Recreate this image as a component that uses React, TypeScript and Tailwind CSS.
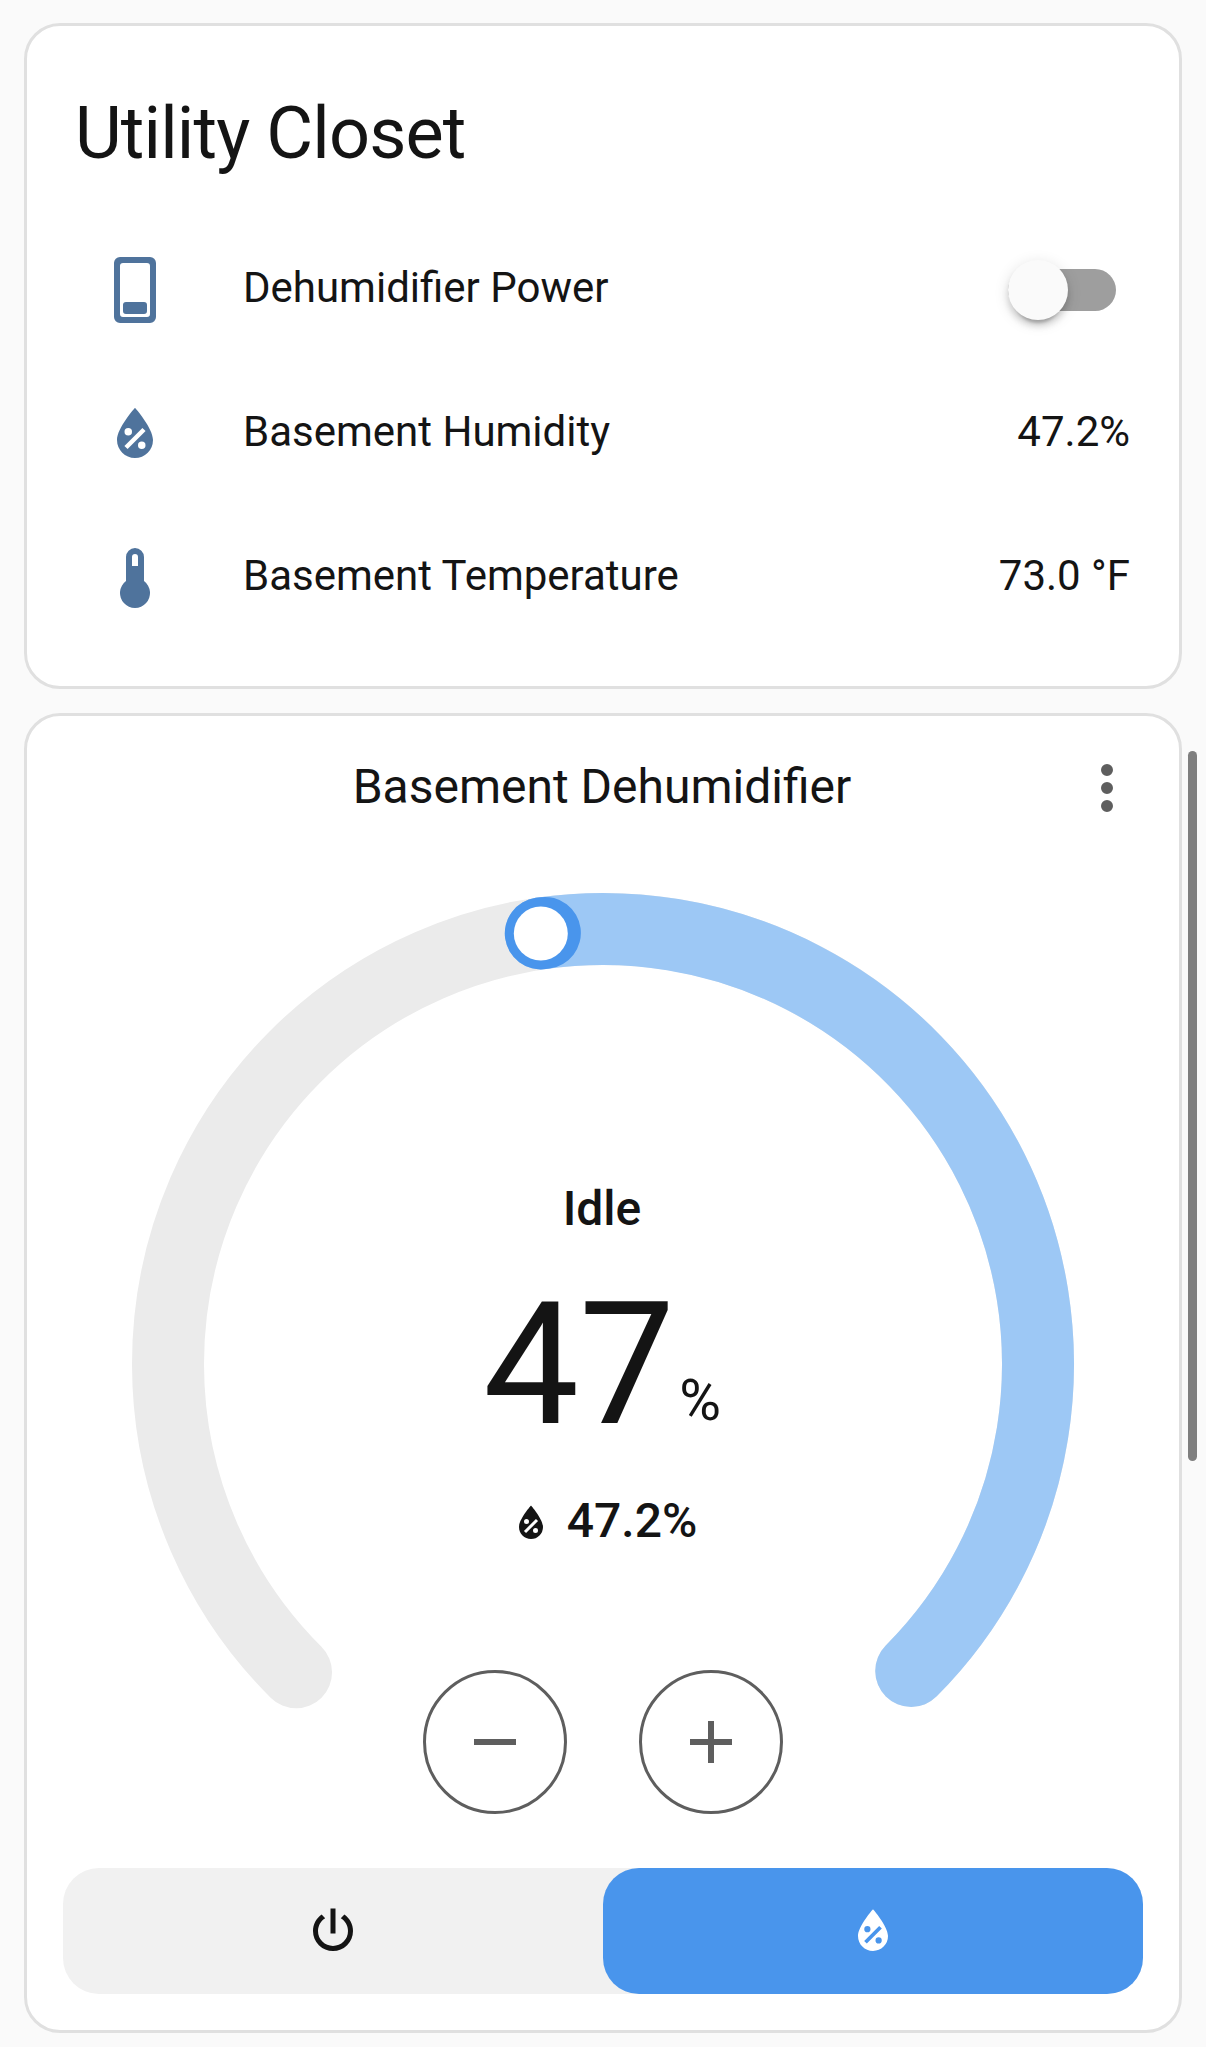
import { useState, type ReactNode } from "react";

const ICONS = {
  waterPercent:
    "M12,3.25C12,3.25 6,10 6,14C6,17.32 8.69,20 12,20A6,6 0 0,0 18,14C18,10 12,3.25 12,3.25M14.47,9.97L15.53,11.03L9.53,17.03L8.47,15.97M9.75,10A1.25,1.25 0 0,1 11,11.25A1.25,1.25 0 0,1 9.75,12.5A1.25,1.25 0 0,1 8.5,11.25A1.25,1.25 0 0,1 9.75,10M14.25,14.5A1.25,1.25 0 0,1 15.5,15.75A1.25,1.25 0 0,1 14.25,17A1.25,1.25 0 0,1 13,15.75A1.25,1.25 0 0,1 14.25,14.5Z",
  thermometer:
    "M15 13V5A3 3 0 0 0 9 5V13A5 5 0 1 0 15 13M12 4A1 1 0 0 1 13 5V8H11V5A1 1 0 0 1 12 4Z",
  dehumidifier:
    "M7 1H17A2 2 0 0 1 19 3V21A2 2 0 0 1 17 23H7A2 2 0 0 1 5 21V3A2 2 0 0 1 7 1M8 3A1 1 0 0 0 7 4V20A1 1 0 0 0 8 21H16A1 1 0 0 0 17 20V4A1 1 0 0 0 16 3H8M9 16H15A1 1 0 0 1 16 17V19A1 1 0 0 1 15 20H9A1 1 0 0 1 8 19V17A1 1 0 0 1 9 16Z",
  dots: "M12,16A2,2 0 0,1 14,18A2,2 0 0,1 12,20A2,2 0 0,1 10,18A2,2 0 0,1 12,16M12,10A2,2 0 0,1 14,12A2,2 0 0,1 12,14A2,2 0 0,1 10,12A2,2 0 0,1 12,10M12,4A2,2 0 0,1 14,6A2,2 0 0,1 12,8A2,2 0 0,1 10,6A2,2 0 0,1 12,4Z",
  minus: "M19,13H5V11H19V13Z",
  plus: "M19,13H13V19H11V13H5V11H11V5H13V11H19V13Z",
  power:
    "M16.56,5.44L15.11,6.89C16.84,7.94 18,9.83 18,12A6,6 0 0,1 12,18A6,6 0 0,1 6,12C6,9.83 7.16,7.94 8.88,6.88L7.44,5.44C5.36,6.88 4,9.28 4,12A8,8 0 0,0 12,20A8,8 0 0,0 20,12C20,9.28 18.64,6.88 16.56,5.44M13,3H11V13H13",
};

function Icon({ name, className }: { name: keyof typeof ICONS; className: string }) {
  return (
    <svg viewBox="0 0 24 24" fill="currentColor" fillRule="evenodd" className={className}>
      <path d={ICONS[name]} />
    </svg>
  );
}

// Dial geometry, in the svg's own 320x320 units
const RADIUS = 145;
const START_ANGLE = -135.12;

const pointAt = (value: number) => {
  const angle = ((value * 2.7 + START_ANGLE) * Math.PI) / 180;
  return { x: 160 + RADIUS * Math.sin(angle), y: 160 - RADIUS * Math.cos(angle) };
};

const arc = (from: number, to: number) => {
  const a = pointAt(from);
  const b = pointAt(to);
  const large = (to - from) * 2.7 > 180 ? 1 : 0;
  return `M${a.x} ${a.y}A${RADIUS} ${RADIUS} 0 ${large} 1 ${b.x} ${b.y}`;
};

function Dial({ target, current }: { target: number; current: number }) {
  const knob = pointAt(target);
  const from = Math.min(target, current);
  const to = Math.max(target, current);

  return (
    <svg viewBox="0 0 320 320" fill="none" strokeWidth="24" strokeLinecap="round" className="block size-[960px]">
      <path d={arc(0, 100)} stroke="#ebebeb" />
      <path d={arc(target, 100)} stroke="#9dc8f5" />
      <path d={arc(from, to)} stroke="#4995ec" />
      <circle cx={knob.x} cy={knob.y} r="9" fill="#fff" />
    </svg>
  );
}

function EntityRow({ icon, name, children }: { icon: keyof typeof ICONS; name: string; children: ReactNode }) {
  return (
    <div className="flex h-36 items-center">
      <div className="flex w-[120px] justify-center">
        <Icon name={icon} className="size-[72px] text-[#4f739c]" />
      </div>
      <div className="ml-12 flex-1 pb-1">{name}</div>
      {children}
    </div>
  );
}

export default function App() {
  const [power, setPower] = useState(false);
  const [target, setTarget] = useState(47);
  const current = 47.2;

  return (
    <div className="relative flex h-[2047px] w-[1206px] flex-col gap-6 bg-[#fafafa] px-6 pt-[23px] font-['Roboto',sans-serif] text-[#141414]">
      <section className="h-[666px] shrink-0 rounded-[36px] border-3 border-[#e0e0e0] bg-white px-12 pt-9 text-[42px] leading-[60px]">
        <h1 className="mb-3 text-[72px] leading-[144px] tracking-[-0.012em]">Utility Closet</h1>
        <EntityRow icon="dehumidifier" name="Dehumidifier Power">
          <button
            role="switch"
            aria-checked={power}
            onClick={() => setPower(!power)}
            className="mr-[15px] flex h-[42px] w-[108px] items-center rounded-full bg-[#9e9e9e] aria-checked:justify-end"
          >
            <span className="size-[60px] shrink-0 rounded-full bg-[#fafafa] shadow-[0_9px_3px_-6px_rgba(0,0,0,0.2),0_6px_6px_0_rgba(0,0,0,0.14),0_3px_15px_0_rgba(0,0,0,0.12)]" />
          </button>
        </EntityRow>
        <EntityRow icon="waterPercent" name="Basement Humidity">
          <div className="pr-px pb-1">47.2%</div>
        </EntityRow>
        <EntityRow icon="thermometer" name="Basement Temperature">
          <div className="pr-px pb-1">73.0 °F</div>
        </EntityRow>
      </section>

      <section className="h-[1320px] shrink-0 rounded-[36px] border-3 border-[#e0e0e0] bg-white px-9">
        <div className="mb-6 grid h-36 grid-cols-[1fr_auto_1fr] items-center">
          <h2 className="col-start-2 pr-0.5 pb-[3px] text-5xl leading-[60px]">Basement Dehumidifier</h2>
          <button className="justify-self-end">
            <Icon name="dots" className="size-[72px] text-[#5e5e5e]" />
          </button>
        </div>

        <div className="relative flex justify-center">
          <Dial target={target} current={current} />
          {/* Readout over the dial */}
          <div className="absolute inset-0 flex flex-col items-center pt-[289px]">
            <div className="pr-0.5 text-5xl leading-[72px] font-medium">Idle</div>
            <div className="mt-[34px] flex h-[171px] items-end gap-1 pr-0.5">
              <span className="text-[171px] leading-[171px]">{target}</span>
              <span className="pb-[21px] text-[57px] leading-[57px]">%</span>
            </div>
            <div className="mt-[35px] flex h-[72px] items-center gap-3 pr-0.5 text-5xl leading-[72px] font-medium">
              <Icon name="waterPercent" className="mt-1 size-12" />
              <span>47.2%</span>
            </div>
            <div className="mt-[113px] flex gap-[72px] text-[#5e5e5e]">
              <button
                onClick={() => setTarget(target - 1)}
                className="flex size-36 items-center justify-center rounded-full border-3 border-[#5e5e5e]"
              >
                <Icon name="minus" className="size-[72px]" />
              </button>
              <button
                onClick={() => setTarget(target + 1)}
                className="flex size-36 items-center justify-center rounded-full border-3 border-[#5e5e5e]"
              >
                <Icon name="plus" className="size-[72px]" />
              </button>
            </div>
          </div>
        </div>

        <div className="mt-6 grid h-[126px] grid-cols-2 rounded-[36px] bg-[#f1f1f1]">
          <button className="flex items-center justify-center">
            <Icon name="power" className="size-[60px]" />
          </button>
          <button className="flex items-center justify-center rounded-[36px] bg-[#4995ec] text-white">
            <Icon name="waterPercent" className="size-[60px]" />
          </button>
        </div>
      </section>

      {/* Page scroll indicator */}
      <div className="absolute top-[751px] right-[9px] h-[710px] w-[9px] rounded-full bg-[#7f7f7f]" />
    </div>
  );
}
